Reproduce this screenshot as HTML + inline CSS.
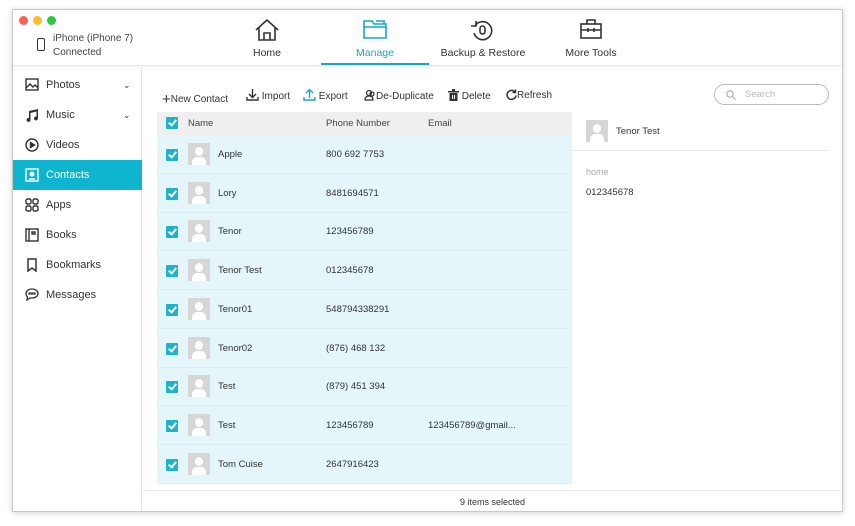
<!DOCTYPE html>
<html><head><style>
*{box-sizing:border-box;margin:0;padding:0}
body{width:855px;height:526px;background:#fff;font-family:"Liberation Sans",sans-serif;position:relative;overflow:hidden;color:#333}
.win{position:absolute;left:12px;top:9px;width:831px;height:503px;border:1px solid #c9c9c9;box-shadow:0 1px 6px rgba(0,0,0,.18);background:#fff;overflow:hidden}
.abs{position:absolute}
.dot{position:absolute;top:6px;width:9px;height:9px;border-radius:50%}
.hdr{position:absolute;left:0;top:0;width:829px;height:56px;border-bottom:1px solid #e6e6e6;box-shadow:0 1px 3px rgba(0,0,0,.06)}
.tab{position:absolute;top:0;height:56px;text-align:center;font-size:10.5px;color:#333}
.tab span{position:absolute;top:37px;left:0;right:0}
.side{position:absolute;left:0;top:57px;width:129px;height:446px;border-right:1px solid #e4e4e4}
.si{position:absolute;left:0;width:129px;height:30px;font-size:11px;line-height:30px;padding-left:33px;color:#333}
.si svg{position:absolute;left:12px;top:8px}
.tb{position:absolute;top:79px;font-size:10px;color:#333}
.row{position:absolute;left:144px;width:415px;height:39px;border-bottom:1px solid #d8eef2;font-size:9.5px;color:#333}
.cb{position:absolute;left:9px;width:12px;height:12px;background:#1fb2c9;border-radius:1px}
.cb:after{content:"";position:absolute;left:3.5px;top:1px;width:3px;height:6px;border:solid #fff;border-width:0 2px 2px 0;transform:rotate(40deg)}
.av{position:absolute;width:22px;height:22px;background:#d6d6d6;overflow:hidden}
.av:before{content:"";position:absolute;left:7px;top:4px;width:8px;height:9px;border-radius:50%;background:#fff}
.av:after{content:"";position:absolute;left:4px;top:14px;width:14px;height:10px;border-radius:5px 5px 0 0;background:#fff}
</style></head><body>
<div class="win">
 <div class="hdr">
  <div class="dot" style="left:6px;background:#fc5f57"></div>
  <div class="dot" style="left:20px;background:#fdbc2e"></div>
  <div class="dot" style="left:34px;background:#28c840"></div>
  <div class="abs" style="left:24px;top:28px;width:8px;height:13px;border:1.5px solid #333;border-radius:2px"></div>
  <div class="abs" style="left:40px;top:22px;font-size:10px;line-height:14px;color:#444">iPhone (iPhone 7)<br>Connected</div>
  <div class="tab" style="left:220px;width:68px">
   <svg class="abs" style="left:21px;top:9px" width="26" height="22" viewBox="0 0 26 22" fill="none" stroke="#333" stroke-width="1.6"><path d="M2 11L13 1l11 10M5 9v12h16V9M10 21v-7h6v7"/></svg><span>Home</span></div>
  <div class="tab" style="left:308px;width:108px;color:#1aa7c3">
   <svg class="abs" style="left:41px;top:8px" width="26" height="22" viewBox="0 0 26 22" fill="none" stroke="#1aa7c3" stroke-width="1.6"><path d="M2 3h8l2 3h12v14H2z M2 9h22 M14 3h8v3"/></svg><span>Manage</span>
   <div class="abs" style="left:0;top:53px;width:108px;height:2px;background:#1aa7c3"></div></div>
  <div class="tab" style="left:420px;width:100px">
   <svg class="abs" style="left:37px;top:8px" width="24" height="24" viewBox="0 0 24 24" fill="none" stroke="#333" stroke-width="1.6"><path d="M5 8A9 9 0 1 1 4 15M1 8h5V3"/><rect x="10" y="8" width="5" height="8" rx="2.5"/></svg><span>Backup &amp; Restore</span></div>
  <div class="tab" style="left:545px;width:66px">
   <svg class="abs" style="left:21px;top:8px" width="24" height="22" viewBox="0 0 24 22" fill="none" stroke="#333" stroke-width="1.6"><rect x="2" y="6" width="20" height="14"/><path d="M8 6V2h8v4M2 12h20M9 10v4M15 10v4"/></svg><span>More Tools</span></div>
 </div>
 <div class="side">
  <div class="si" style="top:3px"><svg width="14" height="13" viewBox="0 0 14 13" fill="none" stroke="#333" stroke-width="1.4"><rect x="1" y="1" width="12" height="11"/><path d="M1 10l4-4 3 3 2-2 3 3"/></svg>Photos<span style="position:absolute;left:110px;font-size:9px">&#8964;</span></div>
  <div class="si" style="top:33px"><svg width="14" height="14" viewBox="0 0 14 14" fill="#333"><path d="M4 3l9-2v9.5a2 2 0 1 1-1.5-2V3.5L5.5 5v7a2 2 0 1 1-1.5-2z"/></svg>Music<span style="position:absolute;left:110px;font-size:9px">&#8964;</span></div>
  <div class="si" style="top:63px"><svg width="14" height="14" viewBox="0 0 14 14" fill="none" stroke="#333" stroke-width="1.4"><circle cx="7" cy="7" r="6"/><path d="M5.5 4.5v5l4-2.5z" fill="#333"/></svg>Videos</div>
  <div class="si" style="top:93px;background:#0fb5cf;color:#fff"><svg width="14" height="14" viewBox="0 0 14 14" fill="none" stroke="#fff" stroke-width="1.4"><rect x="1" y="1" width="12" height="12"/><circle cx="7" cy="6" r="1.8" fill="#fff"/><path d="M4 11h6" /></svg>Contacts</div>
  <div class="si" style="top:123px"><svg width="14" height="14" viewBox="0 0 14 14" fill="none" stroke="#333" stroke-width="1.4"><rect x="1" y="1" width="5" height="5" rx="1.5"/><rect x="8" y="1" width="5" height="5" rx="1.5"/><rect x="1" y="8" width="5" height="5" rx="1.5"/><rect x="8" y="8" width="5" height="5" rx="1.5"/></svg>Apps</div>
  <div class="si" style="top:153px"><svg width="14" height="14" viewBox="0 0 14 14" fill="none" stroke="#333" stroke-width="1.4"><rect x="1" y="1" width="12" height="12"/><path d="M4 1v12M7 4h3v2H7z"/></svg>Books</div>
  <div class="si" style="top:183px"><svg width="14" height="14" viewBox="0 0 14 14" fill="none" stroke="#333" stroke-width="1.5"><path d="M3 1h8v12l-4-3-4 3z"/></svg>Bookmarks</div>
  <div class="si" style="top:213px"><svg width="14" height="13" viewBox="0 0 14 13" fill="none" stroke="#333" stroke-width="1.3"><path d="M7 1c3.5 0 6 2 6 4.5S10.5 10 7 10H5l-3 2 .5-3C1.5 8 1 7 1 5.5 1 3 3.5 1 7 1z"/><circle cx="4.5" cy="5.5" r=".6" fill="#333"/><circle cx="7" cy="5.5" r=".6" fill="#333"/><circle cx="9.5" cy="5.5" r=".6" fill="#333"/></svg>Messages</div>
 </div>
 <div class="tb" style="left:149px"><span style="font-size:15px;position:relative;top:2px">+</span>New Contact</div>
 <div class="tb" style="left:233px"><svg width="13" height="12" viewBox="0 0 13 12" fill="none" stroke="#333" stroke-width="1.4" style="vertical-align:-2px"><path d="M6.5 0v8M3 5l3.5 3.5L10 5M1 8v3h11V8"/></svg> Import</div>
 <div class="tb" style="left:290px"><svg width="13" height="12" viewBox="0 0 13 12" fill="none" stroke="#1aa7c3" stroke-width="1.4" style="vertical-align:-2px"><path d="M6.5 9V1M3 4l3.5-3.5L10 4M1 8v3h11V8"/></svg> Export</div>
 <div class="tb" style="left:351px"><svg width="12" height="12" viewBox="0 0 12 12" fill="none" stroke="#333" stroke-width="1.3" style="vertical-align:-2px"><circle cx="5" cy="4" r="2.5"/><path d="M1 11c0-3 2-4 4-4s4 1 4 4z"/><circle cx="8" cy="5" r="2"/></svg>De-Duplicate</div>
 <div class="tb" style="left:435px"><svg width="11" height="12" viewBox="0 0 11 12" fill="#333" style="vertical-align:-2px"><path d="M0 2h11v1.5H0zM4 0h3v2H4zM1.5 4h8v8h-8z"/><path d="M4 6h1v4H4zM6 6h1v4H6z" fill="#fff"/></svg> Delete</div>
 <div class="tb" style="left:493px"><svg width="11" height="11" viewBox="0 0 11 11" fill="none" stroke="#333" stroke-width="1.5" style="vertical-align:-2px"><path d="M9 3A4.5 4.5 0 1 0 10 6.5M9.5 0.5V3.5H6.5"/></svg>Refresh</div>
 <div class="abs" style="left:701px;top:74px;width:115px;height:21px;border:1px solid #bbb;border-radius:11px;font-size:9.5px;color:#bbb;line-height:19px;padding-left:30px">Search
  <svg class="abs" style="left:11px;top:5px" width="10" height="10" viewBox="0 0 10 10" fill="none" stroke="#aaa" stroke-width="1.1"><circle cx="4" cy="4" r="3.2"/><path d="M6.5 6.5L9.5 9.5"/></svg></div>
 <div class="abs" style="left:144px;top:102px;width:415px;height:23px;background:#efefef;font-size:9.5px;line-height:23px;color:#444">
  <div class="cb" style="top:5px"></div>
  <span class="abs" style="left:31px">Name</span><span class="abs" style="left:169px">Phone Number</span><span class="abs" style="left:271px">Email</span></div>
 <div class="abs" style="left:144px;top:125px;width:415px;height:348px;background:#e4f6f9"></div>
 <div id="rows"></div>
 <div class="abs" style="left:559px;top:102px;width:257px;height:39px;border-bottom:1px solid #ececec"><div class="av" style="left:14px;top:8px"></div><span class="abs" style="left:44px;top:14px;font-size:9.5px">Tenor Test</span></div>
 <div class="abs" style="left:573px;top:157px;font-size:9px;color:#aaa">home</div>
 <div class="abs" style="left:573px;top:177px;font-size:9.5px;color:#333">012345678</div>
 <div class="abs" style="left:130px;top:480px;width:699px;height:23px;border-top:1px solid #e8e8e8;text-align:center;font-size:9px;line-height:23px;color:#333">9 items selected</div>
</div>
<script>
var d=[["Apple","800 692 7753",""],["Lory","8481694571",""],["Tenor","123456789",""],["Tenor Test","012345678",""],["Tenor01","548794338291",""],["Tenor02","(876) 468 132",""],["Test","(879) 451 394",""],["Test","123456789","123456789@gmail..."],["Tom Cuise","2647916423",""]];
var h="";d.forEach(function(r,i){var t=125+i*38.7;h+='<div class="row" style="top:'+t+'px"><div class="cb" style="top:14px"></div><div class="av" style="left:31px;top:8px"></div><span class="abs" style="left:61px;top:14px">'+r[0]+'</span><span class="abs" style="left:169px;top:14px">'+r[1]+'</span><span class="abs" style="left:271px;top:14px">'+r[2]+'</span></div>';});
document.getElementById("rows").outerHTML=h;
</script>
</body></html>
